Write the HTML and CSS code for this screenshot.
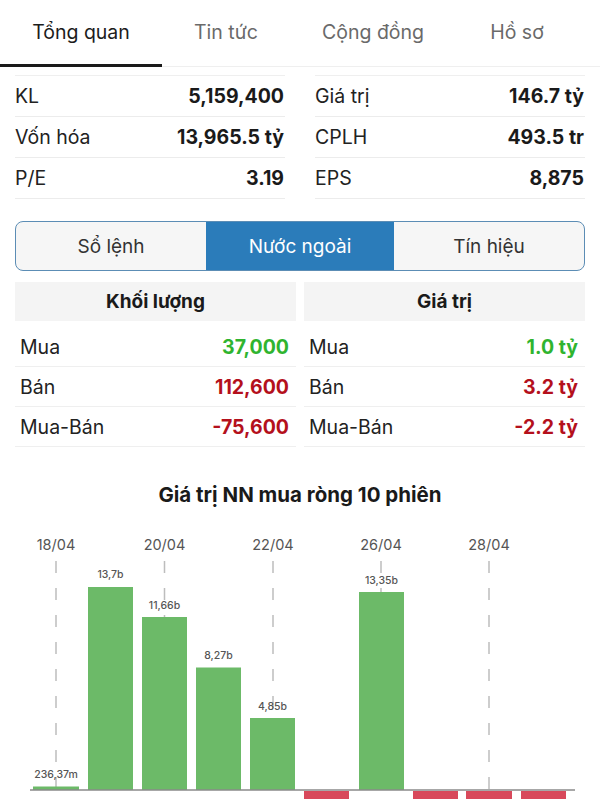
FILE: index.html
```html
<!DOCTYPE html>
<html lang="vi">
<head>
<meta charset="utf-8">
<title>Tổng quan</title>
<link rel="stylesheet" href="styles.css">
</head>
<body>
<nav class="tabs">
  <div class="tab tab-1 active">Tổng quan</div>
  <div class="tab tab-2">Tin tức</div>
  <div class="tab tab-3">Cộng đồng</div>
  <div class="tab tab-4">Hồ sơ</div>
</nav>

<section class="stats">
  <div class="stat-col">
    <div class="stat-row"><span class="label">KL</span><span class="value">5,159,400</span></div>
    <div class="stat-row"><span class="label">Vốn hóa</span><span class="value">13,965.5 tỷ</span></div>
    <div class="stat-row"><span class="label">P/E</span><span class="value">3.19</span></div>
  </div>
  <div class="stat-col">
    <div class="stat-row"><span class="label">Giá trị</span><span class="value">146.7 tỷ</span></div>
    <div class="stat-row"><span class="label">CPLH</span><span class="value">493.5 tr</span></div>
    <div class="stat-row"><span class="label">EPS</span><span class="value">8,875</span></div>
  </div>
</section>

<div class="segmented">
  <div class="seg">Sổ lệnh</div>
  <div class="seg selected">Nước ngoài</div>
  <div class="seg">Tín hiệu</div>
</div>

<section class="foreign">
  <div class="panel">
    <div class="panel-head">Khối lượng</div>
    <div class="f-row"><span class="label">Mua</span><span class="value up">37,000</span></div>
    <div class="f-row"><span class="label">Bán</span><span class="value down">112,600</span></div>
    <div class="f-row"><span class="label">Mua-Bán</span><span class="value down">-75,600</span></div>
  </div>
  <div class="panel">
    <div class="panel-head">Giá trị</div>
    <div class="f-row"><span class="label">Mua</span><span class="value up">1.0 tỷ</span></div>
    <div class="f-row"><span class="label">Bán</span><span class="value down">3.2 tỷ</span></div>
    <div class="f-row"><span class="label">Mua-Bán</span><span class="value down">-2.2 tỷ</span></div>
  </div>
</section>

<section class="chart">
  <h2 class="chart-title">Giá trị NN mua ròng 10 phiên</h2>
  <svg class="chart-svg" width="600" height="280" viewBox="0 520 600 280" xmlns="http://www.w3.org/2000/svg">
    <g class="dates">
      <text x="56" y="551">18/04</text>
      <text x="164.5" y="551">20/04</text>
      <text x="273" y="551">22/04</text>
      <text x="381" y="551">26/04</text>
      <text x="489" y="551">28/04</text>
    </g>
    <g class="grid">
      <line x1="56" y1="562" x2="56" y2="800"/>
      <line x1="164.5" y1="562" x2="164.5" y2="800"/>
      <line x1="273" y1="562" x2="273" y2="800"/>
      <line x1="381" y1="562" x2="381" y2="800"/>
      <line x1="489" y1="562" x2="489" y2="800"/>
    </g>
    <g class="bars-up">
      <rect x="33" y="787.5" width="46" height="3.5"/>
      <rect x="88" y="588" width="45" height="203"/>
      <rect x="142" y="618" width="45" height="173"/>
      <rect x="196" y="668.5" width="45" height="122.5"/>
      <rect x="250" y="719" width="45" height="72"/>
      <rect x="359" y="593" width="45" height="198"/>
    </g>
    <g class="bars-down">
      <rect x="304" y="792" width="45" height="10"/>
      <rect x="413" y="792" width="45" height="10"/>
      <rect x="466" y="792" width="46" height="10"/>
      <rect x="521" y="792" width="45" height="10"/>
    </g>
    <line class="baseline" x1="30" y1="791" x2="575" y2="791"/>
    <g class="bar-labels">
      <text x="56" y="779">236,37m</text>
      <text x="110.5" y="579">13,7b</text>
      <text x="164.5" y="610">11,66b</text>
      <text x="218.5" y="660">8,27b</text>
      <text x="272.5" y="710.5">4,85b</text>
      <text x="381.5" y="585">13,35b</text>
    </g>
  </svg>
</section>
</body>
</html>
```

FILE: styles.css
```css
* { box-sizing: border-box; }

html, body {
  margin: 0;
  padding: 0;
  background: #ffffff;
}

body {
  width: 600px;
  height: 800px;
  overflow: hidden;
  font-family: Inter, "Liberation Sans", "Noto Sans", sans-serif;
  color: #1d1d1f;
}

/* Top tabs */
.tabs {
  display: flex;
  height: 67px;
  border-bottom: 1px solid #efefef;
}

.tab {
  display: flex;
  align-items: center;
  justify-content: center;
  height: 66px;
  padding-bottom: 3px;
  font-size: 19.5px;
  color: #6a6a6a;
  position: relative;
}

.tab-1 { width: 162px; }
.tab-2 { width: 128px; }
.tab-3 { width: 166px; }
.tab-4 { width: 122px; }

.tab.active { color: #1c1c1c; }

.tab.active::after {
  content: "";
  position: absolute;
  left: 0;
  right: 0;
  bottom: -1px;
  height: 3px;
  background: #1a1a1a;
}

/* Stats */
.stats {
  display: grid;
  grid-template-columns: 270px 270px;
  column-gap: 30px;
  margin: 8px 15px 0;
}

.stat-col {
  border-top: 1px solid #efefef;
}

.stat-row {
  display: flex;
  align-items: center;
  justify-content: space-between;
  height: 41px;
  border-bottom: 1px solid #ececec;
  font-size: 19.5px;
}

.stat-row .label {
  color: #222;
}

.stat-row .value {
  font-weight: 700;
  color: #1a1a1a;
  padding-right: 1px;
}

/* Segmented control */
.segmented {
  display: flex;
  margin: 22px 15px 0;
  height: 50px;
  border: 1.5px solid #5c8db5;
  border-radius: 8px;
  overflow: hidden;
  background: #f6f6f6;
}

.seg {
  flex: 1;
  display: flex;
  align-items: center;
  justify-content: center;
  font-size: 19px;
  color: #333;
}

.seg.selected {
  flex: 0 0 188px;
  background: #2b7cba;
  color: #ffffff;
}

/* Foreign table */
.foreign {
  display: grid;
  grid-template-columns: 281px 281px;
  column-gap: 8px;
  margin: 11px 15px 0;
}

.panel-head {
  height: 39px;
  display: flex;
  align-items: center;
  justify-content: center;
  background: #f4f4f4;
  font-size: 19px;
  font-weight: 700;
  color: #1a1a1a;
  margin-bottom: 6px;
}

.f-row {
  display: flex;
  align-items: center;
  justify-content: space-between;
  height: 40px;
  padding: 0 7px 0 5px;
  border-bottom: 1px solid #efefef;
  font-size: 19.5px;
}

.f-row .label { color: #222; }

.f-row .value { font-weight: 700; }

.up { color: #2fb42f; }
.down { color: #b4101c; }

/* Chart */
.chart {
  margin-top: 33px;
}

.chart-title {
  margin: 0;
  height: 30px;
  text-align: center;
  font-size: 20.5px;
  font-weight: 700;
  color: #1a1a1a;
  line-height: 30px;
}

.chart-svg {
  display: block;
  margin-top: 9px;
}

.dates text {
  font-family: Inter, "Liberation Sans", sans-serif;
  font-size: 14.5px;
  fill: #555;
  text-anchor: middle;
}

.grid line {
  stroke: #bdbdbd;
  stroke-width: 1.5;
  stroke-dasharray: 12 15;
}

.bars-up rect { fill: #6cba68; }
.bars-down rect { fill: #d8495b; }

.baseline {
  stroke: #8a8a8a;
  stroke-width: 1.5;
}

.bar-labels text {
  font-family: Inter, "Liberation Sans", sans-serif;
  font-size: 10.5px;
  font-weight: 500;
  fill: #555;
  text-anchor: middle;
}
```
